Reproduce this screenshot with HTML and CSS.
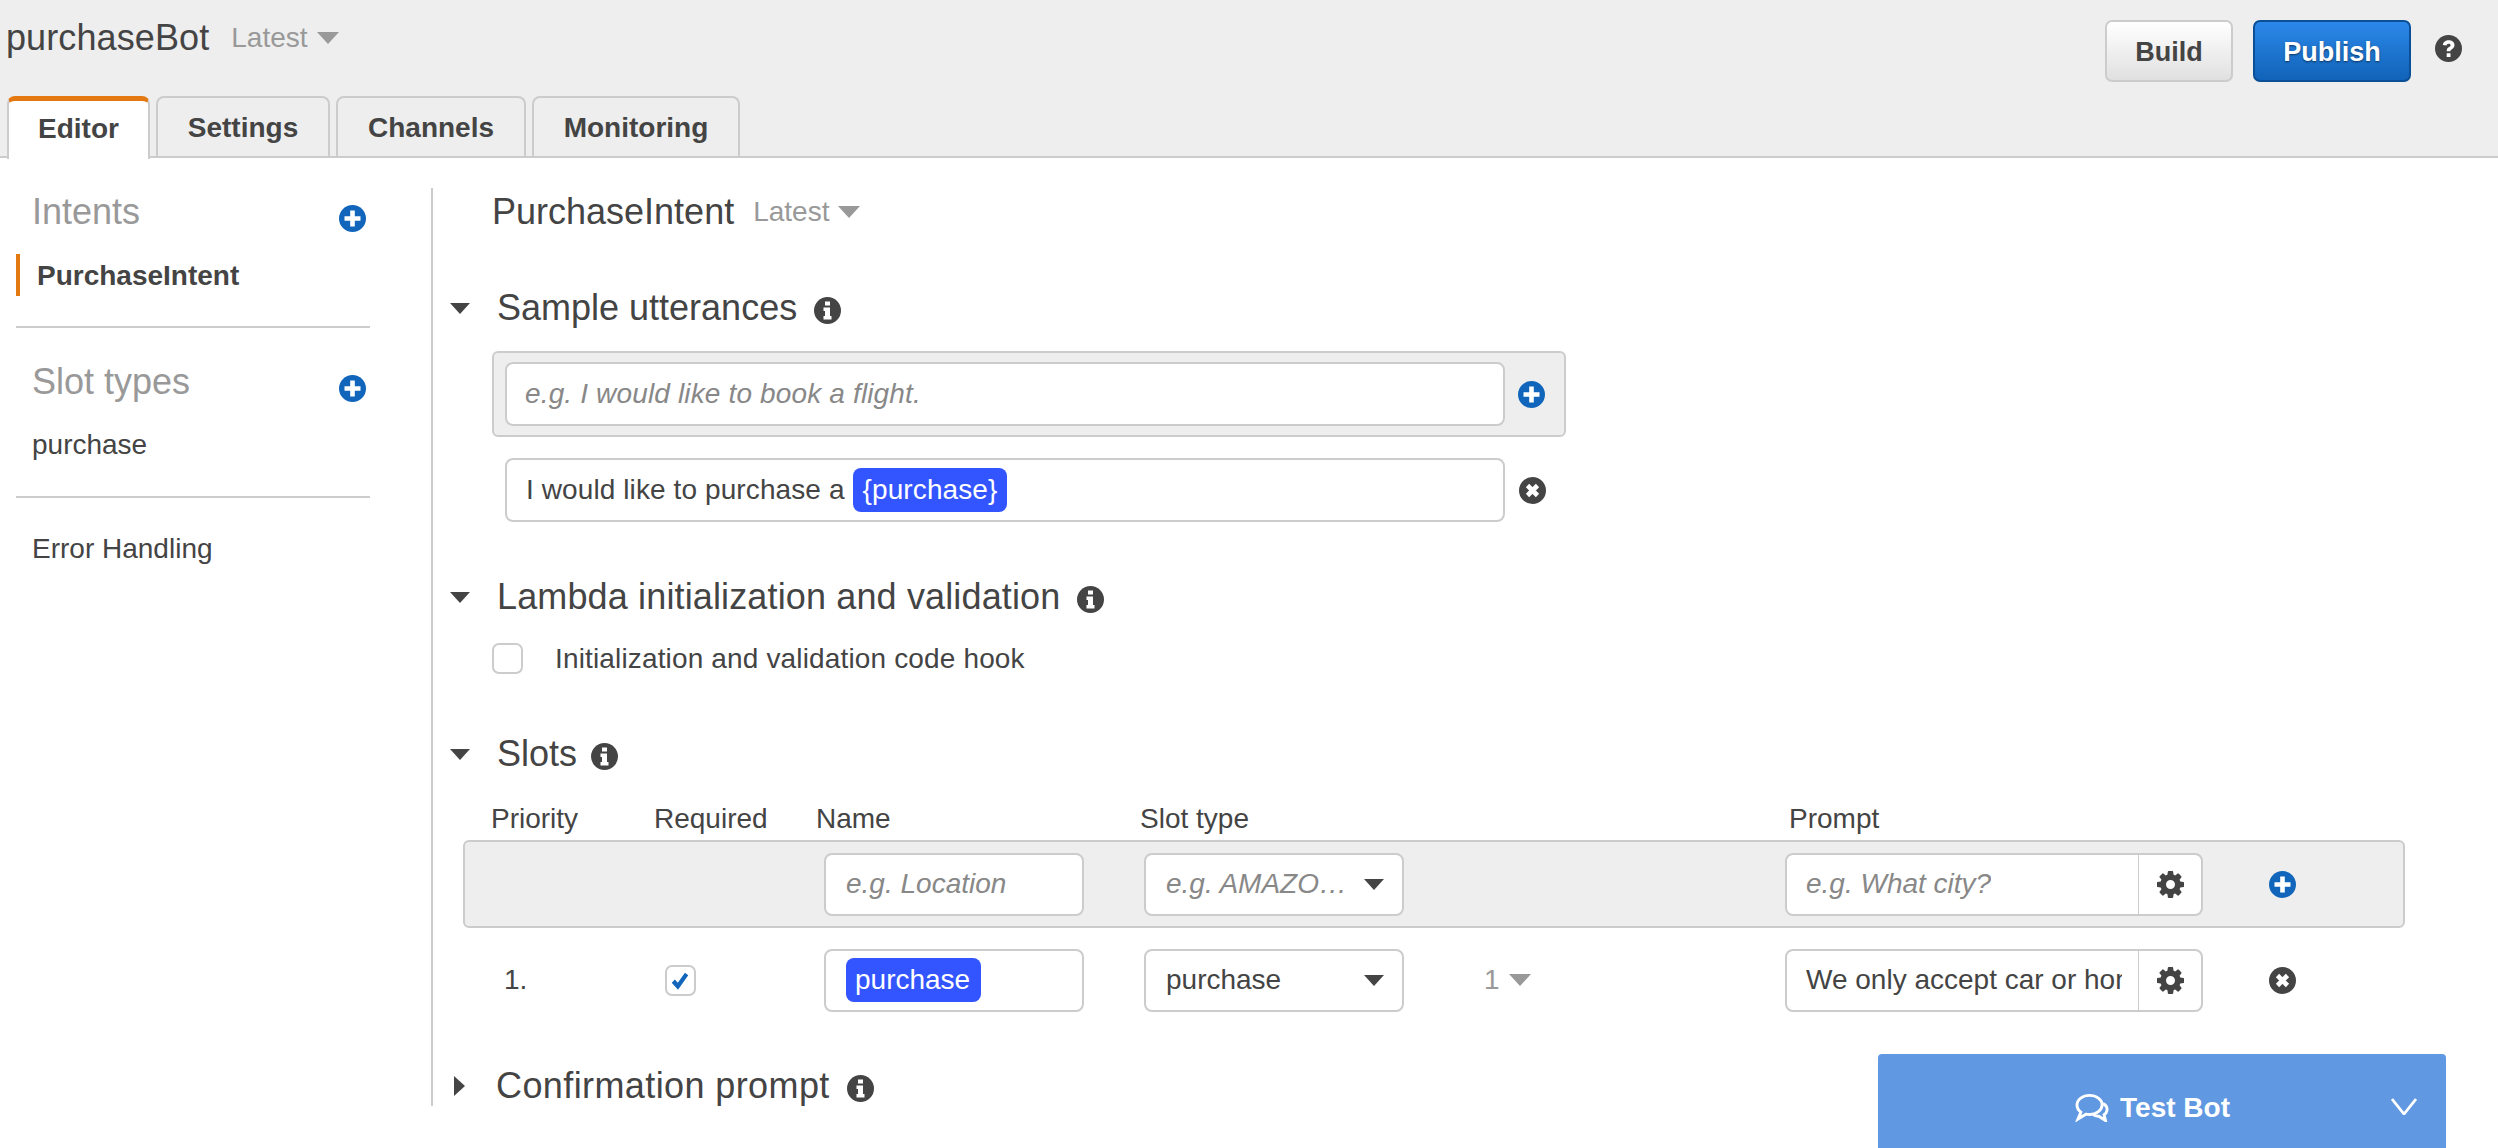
FILE: index.html
```html
<!DOCTYPE html>
<html lang="en">
<head>
<meta charset="utf-8">
<title>purchaseBot</title>
<link rel="stylesheet" href="styles.css">
</head>
<body>
<svg class="sprite" aria-hidden="true">
  <symbol id="i-plus" viewBox="0 0 27 27">
    <circle cx="13.5" cy="13.5" r="13.5" fill="#1166bb"/>
    <path d="M11.200 5.500h4.600v5.700h5.700v4.600h-5.700v5.700h-4.600v-5.700H5.500v-4.600h5.700z" fill="#fff"/>
  </symbol>
  <symbol id="i-close" viewBox="0 0 27 27">
    <circle cx="13.5" cy="13.5" r="13.5" fill="#444"/>
    <path d="M8.500 8.500l10 10M18.500 8.500l-10 10" fill="none" stroke="#fff" stroke-width="4.600"/>
  </symbol>
  <symbol id="i-info" viewBox="0 0 27 27">
    <circle cx="13.5" cy="13.5" r="13.5" fill="#444"/>
    <path d="M11 4.500h5v4h-5zM9.500 10.500h6.500v8.500h1.500v3.500h-8V19h1.500v-5H9.500z" fill="#fff"/>
  </symbol>
  <symbol id="i-help" viewBox="0 0 27 27">
    <circle cx="13.5" cy="13.5" r="13.5" fill="#444"/>
    <path d="M7.800 10c.3-3 2.800-4.800 5.900-4.800 3.200 0 5.800 1.900 5.800 4.900 0 2.300-1.300 3.300-2.600 4.100-1 .6-1.400 1-1.400 2h-3.800c0-2.300.8-3.300 2.300-4.200.9-.5 1.600-1 1.600-1.800 0-.9-.8-1.500-1.900-1.500-1.200 0-2 .7-2.200 1.900zM11.700 18.200h3.800v3.700h-3.800z" fill="#fff"/>
  </symbol>
  <symbol id="i-gear" viewBox="128 128 1536 1536">
    <path fill="#444" d="M1152 896q0-106-75-181t-181-75-181 75-75 181 75 181 181 75 181-75 75-181zm512-109v222q0 12-8 23t-20 13l-185 28q-19 54-39 91 35 50 107 138 10 12 10 25t-9 23q-27 37-99 108t-94 71q-12 0-26-9l-138-108q-44 23-91 38-16 136-29 186-7 28-36 28h-222q-14 0-24.500-8.500t-11.500-21.500l-28-184q-49-16-90-37l-141 107q-10 9-25 9-14 0-25-11-126-114-165-168-7-10-7-23 0-12 8-23 15-21 51-66.500t54-70.500q-27-50-41-99l-183-27q-13-2-21-12.500t-8-23.500v-222q0-12 8-23t19-13l186-28q14-46 39-92-40-57-107-138-10-12-10-24 0-10 9-23 26-36 98.500-107.500t94.500-71.500q13 0 26 10l138 107q44-23 91-38 16-136 29-186 7-28 36-28h222q14 0 24.500 8.500t11.500 21.500l28 184q49 16 90 37l142-107q9-9 24-9 13 0 25 10 129 119 165 170 7 8 7 22 0 12-8 23-15 21-51 66.500t-54 70.500q26 50 41 98l183 28q13 2 21 12.500t8 23.500z"/>
  </symbol>
</svg>

<div class="app">
  <header class="topbar">
    <div class="topbar-row">
      <div class="bot-title">
        <span class="bot-name">purchaseBot</span>
        <span class="version">Latest<i class="caret caret-muted"></i></span>
      </div>
      <div class="actions">
        <button class="btn btn-default">Build</button>
        <button class="btn btn-primary">Publish</button>
        <svg class="icon help"><use href="#i-help"/></svg>
      </div>
    </div>
    <nav class="tabs">
      <a class="tab tab-active">Editor</a>
      <a class="tab">Settings</a>
      <a class="tab">Channels</a>
      <a class="tab">Monitoring</a>
    </nav>
  </header>

  <div class="workspace">
    <aside class="sidebar">
      <div class="side-head"><span>Intents</span><svg class="icon"><use href="#i-plus"/></svg></div>
      <div class="side-item side-item-active">PurchaseIntent</div>
      <hr class="side-rule">
      <div class="side-head"><span>Slot types</span><svg class="icon"><use href="#i-plus"/></svg></div>
      <div class="side-item">purchase</div>
      <hr class="side-rule">
      <div class="side-link">Error Handling</div>
    </aside>

    <main class="editor">
      <h1 class="intent-title">PurchaseIntent <span class="version">Latest<i class="caret caret-muted"></i></span></h1>

      <h2 class="section-head section-first"><i class="caret"></i>Sample utterances<svg class="icon"><use href="#i-info"/></svg></h2>
      <div class="add-box">
        <div class="field field-wide placeholder">e.g. I would like to book a flight.</div>
        <svg class="icon"><use href="#i-plus"/></svg>
      </div>
      <div class="utterance">
        <div class="field field-wide field-value">I would like to purchase a <span class="chip">{purchase}</span></div>
        <svg class="icon"><use href="#i-close"/></svg>
      </div>

      <h2 class="section-head section-lambda"><i class="caret"></i>Lambda initialization and validation<svg class="icon"><use href="#i-info"/></svg></h2>
      <label class="hook"><span class="checkbox"></span>Initialization and validation code hook</label>

      <h2 class="section-head section-slots"><i class="caret"></i>Slots<svg class="icon"><use href="#i-info"/></svg></h2>
      <div class="slots">
        <div class="slot-grid slot-labels">
          <span class="label-priority">Priority</span>
          <span>Required</span>
          <span class="label-name">Name</span>
          <span class="label-type">Slot type</span>
          <span></span>
          <span class="label-prompt">Prompt</span>
        </div>
        <div class="slot-grid slot-new">
          <span></span>
          <span></span>
          <div class="field field-slot placeholder">e.g. Location</div>
          <div class="field field-slot select placeholder"><span class="clip">e.g. AMAZO…</span><i class="caret"></i></div>
          <span></span>
          <div class="prompt-group">
            <div class="prompt-text placeholder"><span class="clip">e.g. What city?</span></div>
            <div class="prompt-gear"><svg class="icon"><use href="#i-gear"/></svg></div>
          </div>
          <svg class="icon"><use href="#i-plus"/></svg>
        </div>
        <div class="slot-grid slot-row">
          <span class="slot-index">1.</span>
          <span class="check-cell"><span class="checkbox checkbox-on"><svg viewBox="0 0 20 20"><path d="M2.500 11.500l2.800-2.800 2.700 2.900L14.500 2.500l3 2.300L8.200 18z" fill="#1166bb"/></svg></span></span>
          <div class="field field-slot"><span class="chip chip-name">purchase</span></div>
          <div class="field field-slot select field-value"><span class="clip">purchase</span><i class="caret"></i></div>
          <span class="version slot-version">1<i class="caret caret-muted"></i></span>
          <div class="prompt-group">
            <div class="prompt-text field-value"><span class="clip">We only accept car or home insurance</span></div>
            <div class="prompt-gear"><svg class="icon"><use href="#i-gear"/></svg></div>
          </div>
          <svg class="icon"><use href="#i-close"/></svg>
        </div>
      </div>

      <h2 class="section-head section-confirm"><i class="caret caret-right"></i>Confirmation prompt<svg class="icon"><use href="#i-info"/></svg></h2>
    </main>
  </div>

  <div class="test-bot">
    <svg class="chat" viewBox="0 0 36 30" fill="none" stroke="#fff" stroke-width="3">
      <path d="M16 2.500c-7 0-13 4-13 10 0 3 1.500 5.500 4 7.300L4 27l8.500-5.200c1.200.3 2.400.4 3.500.4 7 0 13-4.500 13-10s-6-9.700-13-9.700z"/>
      <path d="M30 11c3 1.500 4.500 4 4 7-.3 2-1.500 3.500-3 4.500l1.500 6-7-4.500c-2 0-4-.5-5.500-1.500" />
    </svg>
    <span>Test Bot</span>
    <svg class="chevron" viewBox="0 0 26 17" fill="none" stroke="#fff" stroke-width="2.800"><path d="M1 1l12 15L25 1"/></svg>
  </div>
</div>
</body>
</html>
```

FILE: styles.css
```css
* { box-sizing: border-box; }

html, body {
  margin: 0;
  height: 100%;
  overflow: hidden;
  background: #fff;
}

body {
  font-family: "Liberation Sans", Arial, sans-serif;
  font-size: 28px;
  color: #444;
}

.sprite { display: none; }

.app {
  position: relative;
  height: 1148px;
}

.icon {
  display: block;
  flex: none;
  width: 27px;
  height: 27px;
}

/* Triangular carets */
.caret {
  display: inline-block;
  flex: none;
  width: 0;
  height: 0;
  border-style: solid;
  border-width: 11px 10px 0;
  border-color: #444 transparent transparent;
}

.caret-muted {
  border-width: 12px 11px 0;
  border-top-color: #999;
}

.caret-right {
  border-width: 10px 0 10px 11px;
  border-color: transparent transparent transparent #444;
}

/* Top bar */
.topbar {
  height: 158px;
  background: #eee;
  border-bottom: 2px solid #ccc;
}

.topbar-row {
  display: flex;
  justify-content: space-between;
  align-items: flex-start;
  height: 96px;
  padding: 20px 36px 0 6px;
}

.bot-title {
  display: flex;
  align-items: center;
  height: 36px;
}

.bot-name {
  font-size: 36px;
  line-height: 36px;
  letter-spacing: .1px;
}

.version {
  display: inline-flex;
  align-items: center;
  font-size: 28px;
  font-weight: normal;
  color: #999;
}

.version .caret { margin-left: 9px; }

.bot-title .version { margin-left: 22px; }

.actions {
  display: flex;
  align-items: flex-start;
}

.btn {
  height: 62px;
  border-radius: 7px;
  font: bold 27px "Liberation Sans", Arial, sans-serif;
  padding: 3px 0 0;
}

.btn-default {
  width: 128px;
  border: 2px solid #ccc;
  background: linear-gradient(#fff, #e0e0e0);
  color: #444;
}

.btn-primary {
  width: 158px;
  margin-left: 20px;
  border: 2px solid #0b4f96;
  background: linear-gradient(#2b88e9, #1163b8);
  color: #fff;
  text-shadow: 0 1px 2px rgba(0, 0, 0, .55);
}

.help { margin: 15px 0 0 24px; }

.tabs {
  display: flex;
  gap: 6px;
  padding-left: 7px;
}

.tab {
  display: flex;
  align-items: center;
  justify-content: center;
  height: 60px;
  padding-top: 2px;
  border: 2px solid #ccc;
  border-bottom: 0;
  border-radius: 8px 8px 0 0;
  font-weight: bold;
  font-size: 28px;
}

.tab:nth-child(1) { width: 143px; }
.tab:nth-child(2) { width: 174px; }
.tab:nth-child(3) { width: 190px; }
.tab:nth-child(4) { width: 208px; }

.tab-active {
  height: 63px;
  padding: 0 0 2px;
  background: #fff;
  border-top: 5px solid #e47911;
  position: relative;
  z-index: 1;
}

/* Sidebar and editor */
.workspace {
  display: flex;
  align-items: flex-start;
  padding-top: 30px;
}

.sidebar {
  flex: none;
  width: 433px;
  height: 918px;
  padding-left: 16px;
  padding-right: 61px;
  border-right: 2px solid #ccc;
}

.side-head {
  display: flex;
  justify-content: space-between;
  height: 48px;
  padding: 0 4px 0 16px;
  font-size: 36px;
  line-height: 48px;
  color: #999;
}

.side-head .icon { margin-top: 17px; }

.side-item {
  height: 42px;
  margin-top: 18px;
  padding-left: 16px;
  line-height: 42px;
}

.side-item-active {
  padding: 2px 0 0 17px;
  border-left: 4px solid #e47911;
  font-weight: bold;
  line-height: 40px;
}

.side-rule {
  height: 2px;
  margin: 30px 0;
  border: 0;
  background: #ccc;
}

.side-link {
  padding-left: 16px;
  line-height: 42px;
}

.editor {
  flex: 1;
  min-width: 0;
}

.intent-title {
  margin: 0 0 0 59px;
  font-size: 36px;
  font-weight: normal;
  line-height: 48px;
  display: flex;
  gap: 19px;
  align-items: center;
}

.section-head {
  display: flex;
  align-items: center;
  height: 48px;
  margin: 0;
  padding-left: 17px;
  font-size: 36px;
  font-weight: normal;
  line-height: 48px;
}

.section-head .caret {
  margin-right: 27px;
}

.section-head .caret-right {
  margin: 0 31px 0 4px;
}

.section-head .icon {
  margin: 4px 0 0 17px;
}

.section-first { margin-top: 48px; }
.section-lambda { margin-top: 51px; letter-spacing: .14px; }
.section-slots { margin-top: 56px; }
.section-slots .icon { margin-left: 14px; }
.section-confirm { margin-top: 50px; letter-spacing: .4px; }

.field {
  display: flex;
  align-items: center;
  background: #fff;
  border: 2px solid #ccc;
  border-radius: 8px;
  white-space: nowrap;
}

.field-wide {
  width: 1000px;
  height: 64px;
  padding-left: 19px;
}

.placeholder {
  color: #888;
  font-style: italic;
}

.field-wide.placeholder {
  padding-left: 18px;
  letter-spacing: .15px;
}

.field-value { color: #444; }

.add-box {
  display: flex;
  align-items: center;
  gap: 13px;
  width: 1074px;
  height: 86px;
  margin: 19px 0 0 59px;
  padding-left: 11px;
  background: #eee;
  border: 2px solid #ccc;
  border-radius: 6px;
}

.utterance {
  display: flex;
  align-items: center;
  gap: 14px;
  margin: 21px 0 0 72px;
}

.field-wide.field-value { letter-spacing: .1px; }

.chip {
  display: inline-flex;
  align-items: center;
  height: 44px;
  margin-left: 8px;
  padding: 0 10px;
  background: #3355ff;
  border-radius: 8px;
  color: #fff;
}

.chip-name {
  margin-left: 0;
  width: 135px;
  padding: 0 9px;
}

.hook {
  display: flex;
  align-items: center;
  gap: 32px;
  height: 31px;
  margin: 22px 0 0 59px;
  letter-spacing: .15px;
}

.checkbox {
  display: block;
  flex: none;
  width: 31px;
  height: 31px;
  background: #fff;
  border: 2px solid #ccc;
  border-radius: 7px;
}

.checkbox-on svg {
  display: block;
  width: 22px;
  height: 22px;
  margin: 3px 0 0 2px;
}

/* Slots table: the same columns for labels and rows */
.slots { margin: 20px 0 0 30px; }

.slot-grid {
  display: grid;
  grid-template-columns: 189px 170px 320px 340px 301px 483.5px 27px;
  align-items: center;
}

.slot-labels {
  width: 1942px;
  height: 40px;
  padding-left: 2px;
  margin-bottom: 2px;
  line-height: 41px;
}

.label-priority { padding-left: 26px; }
.label-name { margin-left: -8px; }
.label-type { margin-left: -4px; }
.label-prompt { margin-left: 4px; }

.slot-new {
  width: 1942px;
  height: 88px;
  background: #eee;
  border: 2px solid #ccc;
  border-radius: 6px;
}

.slot-row {
  height: 64px;
  margin-top: 20px;
  padding-left: 2px;
}

.slot-index { padding-left: 39px; }

.check-cell { padding-left: 11px; }

.field-slot {
  width: 260px;
  height: 63px;
  padding: 0 18px 0 20px;
}

.select {
  justify-content: space-between;
}

.clip {
  overflow: hidden;
  white-space: nowrap;
}

.slot-version .caret { margin-left: 9px; }

.prompt-group {
  display: flex;
  width: 418px;
  height: 63px;
  background: #fff;
  border: 2px solid #ccc;
  border-radius: 8px;
}

.prompt-text {
  display: flex;
  align-items: center;
  width: 352px;
  padding: 0 16px 0 19px;
  border-right: 1px solid #ccc;
  white-space: nowrap;
  overflow: hidden;
}

.prompt-gear {
  flex: 1;
  display: flex;
  align-items: center;
  justify-content: center;
}

/* Docked test panel */
.test-bot {
  position: absolute;
  right: 52px;
  bottom: 0;
  display: flex;
  align-items: center;
  justify-content: center;
  gap: 11px;
  width: 568px;
  height: 94px;
  padding: 13px 20px 0 0;
  background: #6098e2;
  border-radius: 4px 4px 0 0;
  color: #fff;
  font-weight: bold;
}

.chat {
  width: 35px;
  height: 29px;
}

.chevron {
  position: absolute;
  top: 44px;
  right: 29px;
  width: 26px;
  height: 17px;
}
```
